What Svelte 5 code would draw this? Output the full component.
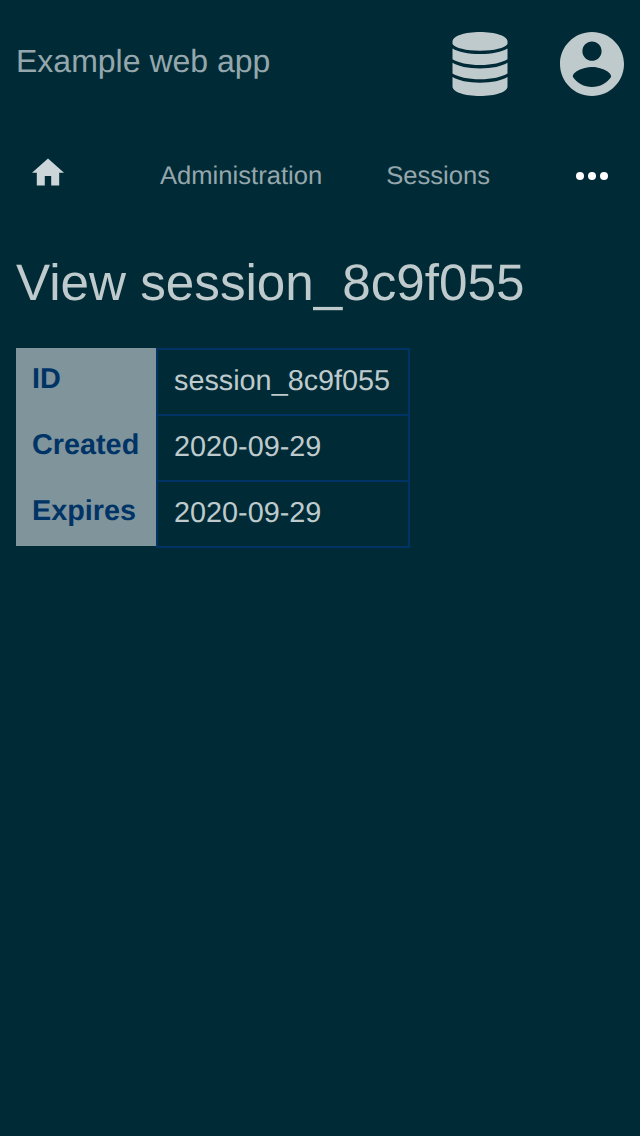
<script>
  const rows = [
    ['ID', 'session_8c9f055'],
    ['Created', '2020-09-29'],
    ['Expires', '2020-09-29'],
  ];
</script>

<div class="page">
  <header>
    <span class="title">Example web app</span>
    <svg class="db" viewBox="0 0 56 64" aria-hidden="true">
      <path d="M.5 9.500C.5 4 13 0 28 0s27.500 4 27.500 9.500v2.500C53 16 42 18.700 28 18.700S3 16 .5 12z" />
      <path d="M.5 16.500C6 20 16 22 28 22s22-2 27.500-5.500v10.700C50 30.500 40 33 28 33S6 30.500.5 27.200z" />
      <path d="M.5 30.700C6 34.200 16 36.400 28 36.400s22-2.200 27.500-5.700v10.700C50 44.700 40 47.200 28 47.200S6 44.700.5 41.400z" />
      <path d="M.5 45C6 48.500 16 50.700 28 50.700s22-2.200 27.500-5.700v9.500C55.500 60 43 64 28 64S.5 60 .5 54.500z" />
    </svg>
    <svg class="user" viewBox="2 2 20 20" aria-hidden="true">
      <path d="M12 2C6.480 2 2 6.480 2 12s4.480 10 10 10 10-4.480 10-10S17.520 2 12 2zm0 3c1.660 0 3 1.340 3 3s-1.340 3-3 3-3-1.340-3-3 1.340-3 3-3zm0 14.200c-2.500 0-4.710-1.280-6-3.220.030-1.990 4-3.080 6-3.080 1.990 0 5.970 1.090 6 3.080-1.290 1.940-3.500 3.220-6 3.220z" />
    </svg>
  </header>

  <nav>
    <svg class="home" viewBox="2 2.750 20 17.500" aria-hidden="true">
      <path d="M10 20v-6h4v6h5v-8h3L12 3 2 12h3v8z" />
    </svg>
    <span class="admin">Administration</span>
    <span class="sessions">Sessions</span>
    <svg class="more" viewBox="0 0 32 8" aria-hidden="true">
      <circle cx="4" cy="4" r="4" /><circle cx="16" cy="4" r="4" /><circle cx="28" cy="4" r="4" />
    </svg>
  </nav>

  <main>
    <h1>View session_8c9f055</h1>
    <dl>
      {#each rows as [label, value]}
        <div class="row">
          <dt>{label}</dt>
          <dd>{value}</dd>
        </div>
      {/each}
    </dl>
  </main>
</div>

<style>
  :global(body) {
    background: #002b36;
  }
  .page {
    min-height: 100vh;
    background: #002b36;
    font-family: 'Liberation Sans', Arial, sans-serif;
    text-rendering: geometricPrecision;
  }
  header {
    display: flex;
    align-items: flex-start;
    height: 128px;
    padding: 32px 16px 0;
    box-sizing: border-box;
    fill: #bfcacd;
  }
  .title {
    flex: 1;
    font-size: 32px;
    line-height: 36px;
    padding-top: 11px;
    color: #95a7ac;
  }
  .db { width: 56px; height: 64px; margin-right: 52px; }
  .user { width: 64px; height: 64px; }
  nav {
    display: flex;
    align-items: flex-start;
    height: 96px;
    padding: 0 32px;
    box-sizing: border-box;
    font-size: 25.6px;
    line-height: 30px;
    color: #95a7ac;
  }
  nav span { padding-top: 33px; }
  .home { width: 32px; height: 28px; margin-top: 30px; fill: #ccd5d7; }
  .admin { margin-left: 96px; }
  .sessions { margin-left: 64px; }
  .more { width: 32px; height: 8px; margin: 44px 0 0 auto; fill: #fff; }
  main { padding: 0 16px; }
  h1 {
    margin: 0;
    padding-top: 30px;
    height: 94px;
    font-size: 51.200px;
    line-height: 58px;
    font-weight: 400;
    color: #bfcacd;
  }
  dl { margin: 0; width: 394px; font-size: 28.800px; line-height: 32px; }
  .row {
    display: grid;
    grid-template-columns: 140px 254px;
    grid-template-rows: 66px;
  }
  dt {
    padding: 15px 0 0 16px;
    background: #80959b;
    color: #003366;
    font-weight: 700;
  }
  dd {
    margin: 0;
    padding: 15px 16px;
    border: 2px solid #003366;
    border-bottom: 0;
    color: #bfcacd;
  }
  .row:last-child dd {
    border-bottom: 2px solid #003366;
    margin-bottom: -2px;
  }
</style>
